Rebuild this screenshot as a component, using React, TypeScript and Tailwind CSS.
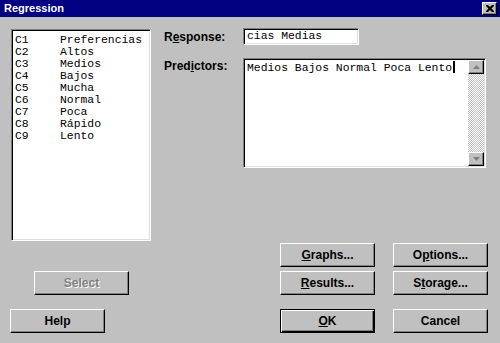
import React from 'react';

const sans = 'font-["Liberation_Sans",Arial,sans-serif]';
const mono = 'font-["Liberation_Mono","Courier_New",monospace]';

// raised 3D button, classic dialog style
const raised =
    'border border-t-white border-l-white border-r-black border-b-black shadow-[inset_-1px_-1px_0_#808080]';
const sunken =
    'border border-t-[#808080] border-l-[#808080] border-r-white border-b-white shadow-[inset_1px_1px_0_#000,inset_-1px_-1px_0_#dfdfdf]';

const columns = [
    { id: 'C1', name: 'Preferencias' },
    { id: 'C2', name: 'Altos' },
    { id: 'C3', name: 'Medios' },
    { id: 'C4', name: 'Bajos' },
    { id: 'C5', name: 'Mucha' },
    { id: 'C6', name: 'Normal' },
    { id: 'C7', name: 'Poca' },
    { id: 'C8', name: 'Rápido' },
    { id: 'C9', name: 'Lento' },
];

function Btn({
    children,
    isDefault,
    disabled,
}: {
    children: React.ReactNode;
    isDefault?: boolean;
    disabled?: boolean;
}) {
    return (
        <button
            type="button"
            className={`flex h-[24px] w-[95px] items-center justify-center bg-[#c0c0c0] text-[12px] font-bold leading-none ${
                isDefault
                    ? 'border border-black shadow-[inset_1px_1px_0_#fff,inset_-1px_-1px_0_#000,inset_-2px_-2px_0_#808080]'
                    : raised
            } ${
                disabled
                    ? 'text-[#808080] [text-shadow:1px_1px_0_#fff]'
                    : 'text-black'
            }`}
        >
            {children}
        </button>
    );
}

function Arrow({ up }: { up?: boolean }) {
    return (
        <div
            className={`flex h-[14px] w-[16px] items-center justify-center bg-[#c0c0c0] ${raised}`}
        >
            <svg width="7" height="4" viewBox="0 0 7 4">
                {up ? (
                    <polygon points="3.5,0 7,4 0,4" fill="#808080" />
                ) : (
                    <polygon points="0,0 7,0 3.5,4" fill="#808080" />
                )}
            </svg>
        </div>
    );
}

export default function App() {
    return (
        <div
            className={`flex h-[343px] w-[500px] flex-col overflow-hidden bg-[#c0c0c0] ${sans}`}
        >
            {/* Title bar */}
            <div className="flex h-[17px] items-center justify-between bg-[#000080] pl-[4px] pr-[3px]">
                <span className="text-[11px] font-bold text-white">
                    Regression
                </span>
                <div
                    className={`flex h-[13px] w-[15px] items-center justify-center bg-[#c0c0c0] ${raised}`}
                >
                    <svg width="8" height="7" viewBox="0 0 8 7">
                        <path
                            d="M0 0h2l2 2 2-2h2v1L5.5 3.5 8 6v1H6L4 5 2 7H0V6l2.5-2.5L0 1z"
                            fill="#000"
                        />
                    </svg>
                </div>
            </div>

            <div className="flex flex-col pt-[11px]">
                {/* Top section */}
                <div className="flex items-start">
                    <div
                        className={`ml-[11px] mt-[1px] h-[212px] w-[140px] overflow-hidden bg-white pl-[3px] pt-[4px] ${sunken} ${mono} text-[11.4px] leading-[12px] text-black`}
                    >
                        {columns.map((c) => (
                            <div key={c.id} className="flex whitespace-nowrap">
                                <span className="w-[45px] shrink-0">
                                    {c.id}
                                </span>
                                <span>{c.name}</span>
                            </div>
                        ))}
                    </div>

                    <div className="ml-[13px] flex flex-col">
                        <div className="flex items-center">
                            <label className="w-[79px] text-[12px] font-bold leading-none text-black">
                                R<span className="underline">e</span>sponse:
                            </label>
                            <div
                                className={`flex h-[17px] w-[116px] items-center bg-white pl-[3px] ${sunken} ${mono} text-[11.4px] text-black`}
                            >
                                cias Medias
                            </div>
                        </div>

                        <div className="mt-[13px] flex items-start">
                            <label className="mt-[2px] w-[79px] text-[12px] font-bold leading-none text-black">
                                Pred<span className="underline">i</span>ctors:
                            </label>
                            <div
                                className={`flex h-[110px] w-[243px] bg-white ${sunken}`}
                            >
                                <div
                                    className={`flex-1 pl-[3px] pt-[2px] ${mono} text-[11.4px] leading-[13px] text-black`}
                                >
                                    Medios Bajos Normal Poca Lento
                                    <span className="ml-[1px] inline-block h-[12px] w-[2px] bg-black align-[-2px]" />
                                </div>
                                <div className="my-[1px] mr-[1px] flex w-[16px] flex-col">
                                    <Arrow up />
                                    <div className="flex-1 bg-[repeating-conic-gradient(#c0c0c0_0_25%,#ffffff_0_50%)] bg-[length:2px_2px]" />
                                    <Arrow />
                                </div>
                            </div>
                        </div>
                    </div>
                </div>

                {/* Graphs / Options */}
                <div className="ml-[280px] mt-[2px] flex gap-[18px]">
                    <Btn>
                        <span className="underline">G</span>raphs...
                    </Btn>
                    <Btn>
                        O<span className="underline">p</span>tions...
                    </Btn>
                </div>

                {/* Select / Results / Storage */}
                <div className="mt-[4px] flex">
                    <div className="ml-[34px]">
                        <Btn disabled>Select</Btn>
                    </div>
                    <div className="ml-[151px] flex gap-[18px]">
                        <Btn>
                            <span className="underline">R</span>esults...
                        </Btn>
                        <Btn>
                            S<span className="underline">t</span>orage...
                        </Btn>
                    </div>
                </div>

                {/* Help / OK / Cancel */}
                <div className="mt-[14px] flex">
                    <div className="ml-[10px]">
                        <Btn>Help</Btn>
                    </div>
                    <div className="ml-[175px] flex gap-[18px]">
                        <Btn isDefault>
                            <span className="underline">O</span>K
                        </Btn>
                        <Btn>Cancel</Btn>
                    </div>
                </div>
            </div>
        </div>
    );
}
